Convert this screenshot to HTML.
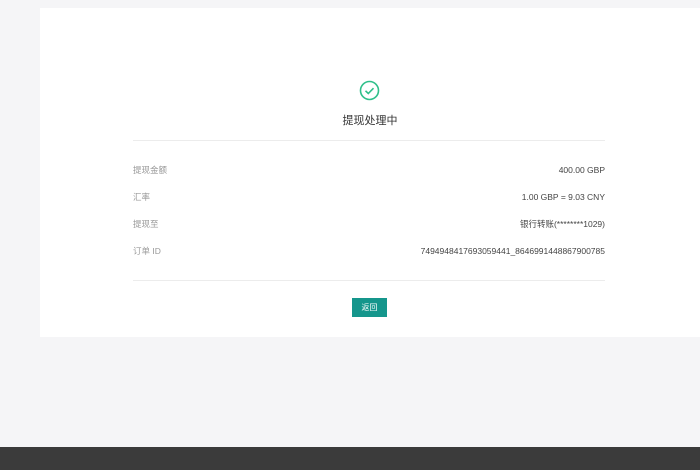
<!DOCTYPE html><html><head><meta charset="utf-8"><style>
body{margin:0;width:700px;height:470px;background:#f5f5f7;position:relative;overflow:hidden;font-family:"Liberation Sans","Noto Sans CJK SC",sans-serif}
.card{position:absolute;left:40px;top:8px;width:660px;height:329px;background:#fff}
.hr{position:absolute;left:133px;width:472px;height:1px;background:#ececec}
.row{position:absolute;left:133px;width:472px;font-size:8.5px;color:#999;display:flex;justify-content:space-between;line-height:12px}
.row span:last-child{color:#444}
.foot{position:absolute;left:0;top:447px;width:700px;height:23px;background:#3b3b3b}
</style></head><body>
<div class="card"></div>
<svg style="position:absolute;left:359px;top:80px" width="21" height="21" viewBox="0 0 21 21"><circle cx="10.5" cy="10.5" r="9" fill="none" stroke="#2fbf8a" stroke-width="1.6"/><path d="M6.5 10.8l2.8 2.7 5.2-5.3" fill="none" stroke="#2fbf8a" stroke-width="1.6"/></svg>
<div style="position:absolute;left:0;width:740px;top:112px;text-align:center;font-size:11px;color:#333">提现处理中</div>
<div class="hr" style="top:140px"></div>
<div class="row" style="top:164px"><span>提现金额</span><span>400.00 GBP</span></div>
<div class="row" style="top:191px"><span>汇率</span><span>1.00 GBP = 9.03 CNY</span></div>
<div class="row" style="top:218px"><span>提现至</span><span>银行转账(********1029)</span></div>
<div class="row" style="top:245px"><span>订单 ID</span><span>7494948417693059441_8646991448867900785</span></div>
<div class="hr" style="top:280px"></div>
<div style="position:absolute;left:352px;top:298px;width:35px;height:19px;background:#15968c;color:#fff;font-size:8px;line-height:19px;text-align:center">返回</div>
<div class="foot"></div>
</body></html>
